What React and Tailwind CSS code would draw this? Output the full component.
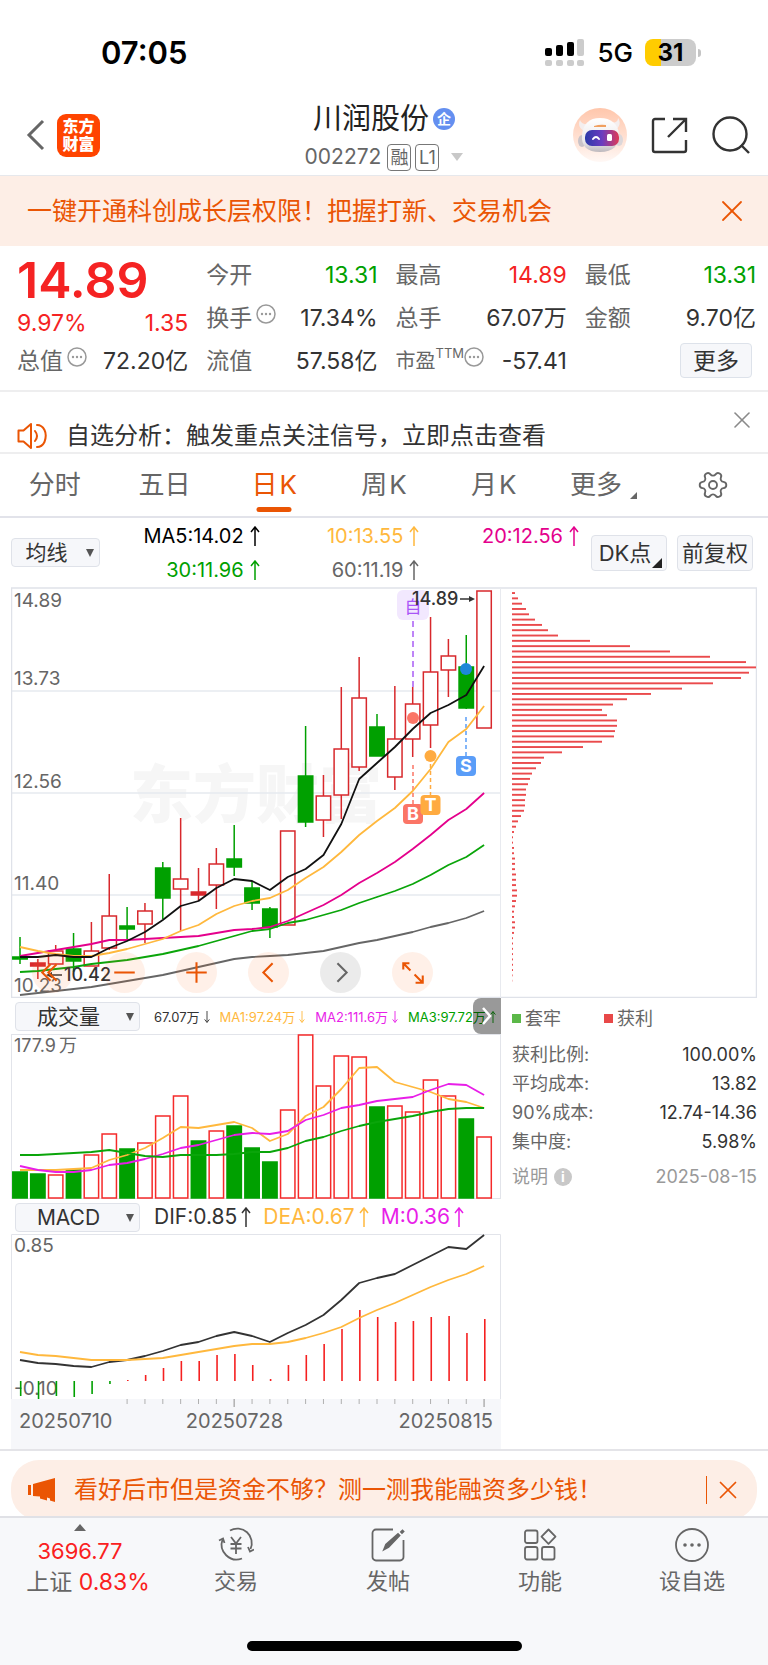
import React from 'react';
import { Settings, X } from 'lucide-react';

const RED = '#d8282c';
const GREEN = '#00a000';

const stepX = (i) => 9 + i * 17.85;
const toPoints = (values) => values.map((y, i) => `${stepX(i).toFixed(1)},${y}`).join(' ');

// kind, high, body top, body bottom, low
const candles = [
  ['g', 350, 370, 372, 377], ['s', 372, 376, 379, 392], ['r', 358, 364, 377, 377],
  ['g', 346, 362, 374, 385], ['r', 335, 364, 379, 379], ['r', 287, 329, 361, 363],
  ['g', 320, 339, 342, 352], ['r', 316, 324, 337, 356], ['g', 275, 281, 311, 332],
  ['r', 231, 292, 302, 344], ['s', 281, 305, 308, 314], ['r', 261, 277, 298, 322],
  ['g', 238, 272, 280, 289], ['g', 294, 301, 316, 323], ['g', 320, 322, 340, 351],
  ['r', 244, 244, 338, 338], ['g', 139, 189, 235, 240], ['r', 188, 209, 233, 250],
  ['r', 100, 162, 208, 232], ['r', 70, 111, 180, 184], ['g', 127, 140, 169, 169],
  ['r', 99, 152, 190, 203], ['r', 100, 117, 152, 170], ['r', 30, 85, 138, 161],
  ['r', 52, 69, 83, 110], ['g', 48, 80, 121, 122], ['r', 4, 4, 141, 141],
];

const priceLines = [
  { color: '#666666', values: [408, 406, 404, 402, 400, 397, 394, 391, 388, 384, 380, 376, 372, 370, 369, 368, 366, 364, 360, 356, 353, 349, 345, 340, 336, 331, 324] },
  { color: '#0aa50a', values: [385, 384, 382, 380, 377, 375, 373, 370, 367, 363, 359, 354, 349, 344, 342, 336, 333, 328, 323, 316, 310, 304, 297, 288, 278, 270, 258] },
  { color: '#e4008c', values: [369, 366, 363, 360, 357, 353, 353, 352, 351, 350, 349, 346, 343, 342, 340, 334, 326, 318, 308, 296, 286, 275, 262, 248, 233, 222, 206] },
  { color: '#ffb83d', values: [360, 364, 367, 369, 369, 366, 362, 357, 352, 344, 338, 327, 319, 314, 311, 303, 291, 280, 265, 248, 234, 221, 204, 182, 155, 142, 119] },
  { color: '#111111', values: [370, 370, 368, 370, 370, 361, 354, 345, 333, 319, 314, 301, 292, 294, 303, 290, 282, 268, 237, 192, 176, 160, 142, 126, 118, 108, 79] },
];

const volumes = [138, 140, 141, 136, 121, 100, 115, 109, 82, 62, 107, 97, 92, 114, 128, 76, 1, 52, 22, 23, 73, 72, 78, 46, 62, 85, 103];
const volumeDown = [0, 1, 3, 6, 10, 12, 13, 14, 20, 25];
const volumeLines = [
  { color: '#ffb83d', values: [136, 136, 136, 135, 134, 126, 121, 114, 104, 93, 94, 91, 88, 94, 107, 100, 82, 73, 55, 34, 33, 48, 53, 58, 65, 68, 74] },
  { color: '#e81ee8', values: [132, 136, 138, 138, 136, 131, 129, 125, 120, 114, 111, 106, 101, 99, 100, 97, 86, 81, 74, 71, 67, 65, 63, 56, 50, 51, 61] },
  { color: '#0aa50a', values: [121, 121, 120, 119, 118, 116, 119, 122, 123, 121, 121, 121, 120, 118, 118, 114, 107, 103, 97, 92, 88, 85, 82, 78, 75, 74, 74] },
];

const dif = [126, 129, 130, 132, 133, 128, 126, 122, 117, 111, 108, 102, 98, 102, 108, 99, 91, 81, 66, 49, 44, 40, 31, 22, 13, 15, 1];
const dea = [118, 121, 122, 124, 126, 126, 126, 125, 124, 121, 118, 115, 112, 110, 110, 108, 104, 99, 93, 84, 76, 69, 61, 53, 46, 40, 32];
const histogram = [162, 165, 162, 163, 160, 150, 146, 141, 134, 127, 127, 121, 120, 131, 145, 131, 121, 110, 95, 76, 83, 88, 87, 83, 82, 99, 85];

const chips = [
  3, 6, 10, 14, 17, 23, 30, 36, 46, 78, 118, 158, 198, 234, 244, 237, 229, 201, 170, 139, 115, 101, 90, 95, 105,
  105, 103, 102, 90, 71, 50, 32, 29, 24, 20, 18, 16, 14, 14, 13, 13, 12, 9, 6, 4, 2, 1, 1, 2, 2,
  3, 3, 3, 4, 4, 4, 5, 5, 4, 3, 2, 2, 3, 3, 2, 1, 1, 1, 1, 1, 1, 1, 0.6, 0.3,
];

export default function App() {
  return (
    <div className="w-full bg-white text-[#333] font-[Inter,'Noto_Sans_CJK_SC',sans-serif]">
      <StatusBar />
      <Header />
      <div className="h-[70px] pl-[27px] pr-[18px] flex items-center justify-between bg-[#fdeee6] text-[#ea5504]">
        <p className="text-[25px] leading-8">一键开通科创成长层权限！把握打新、交易机会</p>
        <button aria-label="关闭公告"><X size={36} strokeWidth={1.2} /></button>
      </div>
      <Quote />
      <div className="h-[62px] border-b-2 border-[#eeeeef] pl-[17px] pr-3 pb-px flex items-end">
        <SpeakerIcon />
        <p className="ml-[18px] flex-1 text-[24px] leading-[30px]">自选分析：触发重点关注信号，立即点击查看</p>
        <button aria-label="关闭提示" className="self-start mt-3.5 text-[#8a8a8a]"><X size={28} strokeWidth={1.4} /></button>
      </div>
      <PeriodTabs />
      <MaBar />
      <main className="px-[11px] flex items-start">
        <div className="flex-[490] min-w-0">
          <PriceChart />
          <VolumeBar />
          <VolumeChart />
          <MacdBar />
          <MacdChart />
          <DateAxis />
        </div>
        <div className="flex-[256] min-w-0">
          <ChipChart />
          <ChipInfo />
        </div>
      </main>
      <div className="h-[67px] border-t-2 border-[#e4e4e8] px-[11px] pt-[9px] overflow-hidden">
        <div className="h-[60px] rounded-[28px] bg-[#fdeee6] text-[#ea5504] pl-[17px] pr-3.5 flex items-center">
          <MegaphoneIcon />
          <p className="ml-[18px] flex-1 text-[24px] leading-8">看好后市但是资金不够？测一测我能融资多少钱！</p>
          <span className="w-px h-7 bg-[#ea5504] mr-1.5" />
          <button aria-label="关闭广告"><X size={30} strokeWidth={1.4} /></button>
        </div>
      </div>
      <BottomNav />
    </div>
  );
}

function StatusBar() {
  return (
    <div className="h-[95px] pl-[101px] pr-[67px] pt-2.5 flex items-center justify-between text-black">
      <span className="text-[31px] font-semibold leading-9">07:05</span>
      <div className="flex items-center">
        <svg width="40" height="28" viewBox="0 0 40 28">
          <rect x="0" y="9" width="7" height="8" rx="2" />
          <rect x="11" y="6" width="7" height="11" rx="2" />
          <rect x="22" y="3" width="7" height="14" rx="2" />
          <rect x="32" y="0" width="7" height="17" rx="2" fill="#cccccc" />
          {[0, 11, 22, 32].map((x) => (
            <rect key={x} x={x} y="21" width="7" height="6" rx="2" fill="#cccccc" />
          ))}
        </svg>
        <span className="ml-3 text-[26px] font-medium leading-7">5G</span>
        <div className="ml-3 w-[51px] h-[27px] rounded-lg overflow-hidden bg-[linear-gradient(90deg,#ffcc00_31%,#cccccc_31%)] text-center text-[24px] leading-[27px] font-bold">
          31
        </div>
        <span className="ml-0.5 w-[3px] h-2 rounded-r-full bg-[#c4c4c4]" />
      </div>
    </div>
  );
}

function Header() {
  return (
    <header className="h-[81px] border-b border-[#e6e8ec] px-[18px] grid grid-cols-[1fr_auto_1fr] items-center">
      <div className="pl-2 flex items-center gap-3">
        <button aria-label="返回">
          <svg width="19" height="32" viewBox="0 0 19 32" fill="none" stroke="#666" strokeWidth="3">
            <path d="M17 2 3 16l14 14" />
          </svg>
        </button>
        <span className="size-[43px] rounded-[9px] bg-[#ff4400] text-white text-[16px] leading-[18px] font-black flex items-center justify-center text-center">
          东方<br />财富
        </span>
      </div>
      <div className="flex flex-col items-center gap-2 pt-1">
        <h1 className="flex items-center gap-1 text-[29px] leading-8 text-[#222]">
          川润股份
          <span className="size-[22px] rounded-full bg-[#648ff0] text-white text-[14px] leading-[22px] font-bold text-center">企</span>
        </h1>
        <div className="flex items-center gap-1 text-[21px] leading-7 text-[#666]">
          <span className="mr-0.5">002272</span>
          <span className="h-[27px] w-6 rounded border border-[#777] text-[18px] leading-[25px] text-center">融</span>
          <span className="h-[27px] w-6 rounded border border-[#777] text-[18px] leading-[25px] text-center">L1</span>
          <svg width="12" height="8" viewBox="0 0 12 8" className="ml-2"><path d="M0 0h12L6 8Z" fill="#c8c8c8" /></svg>
        </div>
      </div>
      <div className="flex items-center justify-end gap-6 text-[#333]">
        <button aria-label="智能助手"><RobotIcon /></button>
        <button aria-label="分享">
          <svg width="37" height="37" viewBox="0 0 37 37" fill="none" stroke="currentColor" strokeWidth="2.4">
            <path d="M14 2H4a2 2 0 0 0-2 2v29a2 2 0 0 0 2 2h29a2 2 0 0 0 2-2V23M22 2h13v13M35 2 17 20" />
          </svg>
        </button>
        <button aria-label="搜索">
          <svg width="38" height="38" viewBox="0 0 38 38" fill="none" stroke="currentColor" strokeWidth="2.4">
            <circle cx="18" cy="18" r="16.5" />
            <path d="m29 29 8 8" />
          </svg>
        </button>
      </div>
    </header>
  );
}

function RobotIcon() {
  return (
    <svg width="54" height="54" viewBox="0 0 54 54">
      <defs>
        <linearGradient id="halo" x1="0" y1="0" x2="0" y2="1">
          <stop offset="0" stopColor="#ffc6ab" />
          <stop offset="0.6" stopColor="#ffe3d6" />
          <stop offset="1" stopColor="#fff8f5" />
        </linearGradient>
        <linearGradient id="shell" x1="0" y1="0" x2="0" y2="1">
          <stop offset="0" stopColor="#ffffff" />
          <stop offset="0.7" stopColor="#ebe8ea" />
          <stop offset="1" stopColor="#bdb8bd" />
        </linearGradient>
        <linearGradient id="visor" x1="0" y1="0" x2="1" y2="0">
          <stop offset="0" stopColor="#2b3aa8" />
          <stop offset="0.5" stopColor="#6a3cc0" />
          <stop offset="1" stopColor="#e03a55" />
        </linearGradient>
      </defs>
      <circle cx="27" cy="27" r="27" fill="url(#halo)" />
      <path d="M7 12c-2 4-1 8 4 11l5-7c-5 1-8-1-9-4ZM45 10c3 4 2 9-3 12l-5-7c5 0 8-1 8-5Z" fill="#f4eeee" />
      <ellipse cx="9" cy="33" rx="4" ry="6" fill="#c9c3c8" />
      <ellipse cx="46" cy="32" rx="4" ry="6" fill="#dcd7da" />
      <path d="M27 10c11 0 18 6 19 16 1 11-6 18-19 18S8 38 9 27c1-11 7-17 18-17Z" fill="url(#shell)" />
      <path d="M21 18q6-2 12-1v2H21Z" fill="#f0a060" />
      <rect x="12" y="22" width="34" height="16" rx="7" fill="url(#visor)" />
      <path d="M20 31q3-4 6 0" fill="none" stroke="#fff" strokeWidth="2" strokeLinecap="round" />
      <rect x="34" y="26" width="5" height="7" rx="1.500" fill="#fff" />
    </svg>
  );
}

function SpeakerIcon() {
  return (
    <svg width="31" height="28" viewBox="0 0 31 28" fill="none" stroke="#ea5504" strokeWidth="2" strokeLinejoin="round" strokeLinecap="round" className="shrink-0 mb-px">
      <path d="M1.500 8.500h5L14 2v24l-7.500-6.500h-5Z" />
      <path d="M18 9q4 5 0 10M20 3q5 0 7.500 5t0 12Q25 25 20 25" />
    </svg>
  );
}

function MegaphoneIcon() {
  return (
    <svg width="28" height="26" viewBox="0 0 28 26" fill="currentColor" className="shrink-0">
      <path d="M0 8h3v10H0ZM5 7 27 1v24l-5-1.500v-2l-3-1v3l-7-2v-2L5 19Z" />
    </svg>
  );
}

function Dots() {
  return (
    <svg width="20" height="20" viewBox="0 0 20 20" className="mb-2 shrink-0" fill="#999">
      <circle cx="10" cy="10" r="9" fill="none" stroke="#999" strokeWidth="1.500" />
      <circle cx="6" cy="10" r="1.200" /><circle cx="10" cy="10" r="1.200" /><circle cx="14" cy="10" r="1.200" />
    </svg>
  );
}

function Stat({ label, value, dots, color = 'text-[#333]' }) {
  return (
    <div className="h-[43px] flex items-center justify-between text-[23px] leading-8 whitespace-nowrap">
      <span className="flex items-center gap-1 text-[#666]">{label}{dots && <Dots />}</span>
      <span className={color}>{value}</span>
    </div>
  );
}

function Quote() {
  return (
    <section className="pl-[17px] pr-3 pt-[7px] pb-2 border-b-2 border-[#eeeeef] grid grid-cols-4 gap-x-[18px]">
      <div>
        <div className="h-[54px] flex items-center text-[50px] leading-[54px] font-semibold text-[#f52323]">14.89</div>
        <div className="h-8 flex items-center justify-between text-[23px] leading-8 text-[#f52323]">
          <span>9.97%</span>
          <span>1.35</span>
        </div>
        <Stat label="总值" dots value="72.20亿" />
      </div>
      <div>
        <Stat label="今开" value="13.31" color="text-[#00a000]" />
        <Stat label="换手" dots value="17.34%" />
        <Stat label="流值" value="57.58亿" />
      </div>
      <div>
        <Stat label="最高" value="14.89" color="text-[#f52323]" />
        <Stat label="总手" value="67.07万" />
        <div className="h-[43px] flex items-center justify-between text-[23px] leading-8">
          <span className="flex items-center text-[#666] text-[20px]">
            市盈<span className="mb-4 text-[13px] leading-4">TTM</span><Dots />
          </span>
          <span>-57.41</span>
        </div>
      </div>
      <div>
        <Stat label="最低" value="13.31" color="text-[#00a000]" />
        <Stat label="金额" value="9.70亿" />
        <div className="h-[43px] flex items-center justify-end pr-1">
          <button className="w-[72px] h-[35px] rounded border border-[#dde2ea] bg-[#f6f7fa] text-[23px] leading-8">更多</button>
        </div>
      </div>
    </section>
  );
}

function PeriodTabs() {
  const tabs = ['分时', '五日', '日K', '周K', '月K'];
  return (
    <nav className="h-[64px] border-b-2 border-[#e2e3ea] flex text-[26px] leading-8 text-[#666]">
      {tabs.map((tab) => (
        <button key={tab} className={`flex-1 relative ${tab === '日K' ? 'text-[#ea5504]' : ''}`}>
          {tab.replace('K', ' K').split(' ').map((part) => (
            <span key={part} className="mx-px">{part}</span>
          ))}
          {tab === '日K' && <span className="absolute bottom-1 left-1/2 -translate-x-1/2 w-[35px] h-[5px] rounded-sm bg-[#ea5504]" />}
        </button>
      ))}
      <button className="flex-1 flex items-center justify-center gap-2">
        更多
        <svg width="7" height="7" viewBox="0 0 7 7" className="mt-5"><path d="M7 0v7H0Z" fill="#666" /></svg>
      </button>
      <button aria-label="设置" className="flex-1 flex items-center justify-center">
        <Settings size={32} strokeWidth={1.4} className="rotate-90" />
      </button>
    </nav>
  );
}

function Arrow({ down, small }) {
  return (
    <svg viewBox="0 0 10 20" fill="none" stroke="currentColor" strokeWidth="1.500"
      className={`inline-block shrink-0 ${small ? 'w-[6px] h-3' : 'w-[10px] h-5'} ${down ? 'rotate-180' : ''}`}
    >
      <path d="M5 20V1M1 6l4-5 4 5" />
    </svg>
  );
}

function Picker({ label, options, className }) {
  return (
    <span className={`relative shrink-0 ${className}`}>
      <select aria-label={label} className="w-full h-[29px] appearance-none rounded border border-[#dfe2e9] bg-[#f6f7fa] pl-3 pr-[30px] text-[21px] leading-[27px] text-center text-[#333]">
        {options.map((o) => <option key={o}>{o}</option>)}
      </select>
      <svg width="8" height="8" viewBox="0 0 8 8" className="absolute right-[6px] top-[11px] pointer-events-none"><path d="M0 0h8L4 8Z" fill="#555" /></svg>
    </span>
  );
}

function MaBar() {
  const items = [
    ['MA5:14.02', 'text-black'], ['10:13.55', 'text-[#ffb83d]'], ['20:12.56', 'text-[#e4008c]'],
    ['30:11.96', 'text-[#00a000]'], ['60:11.19', 'text-[#666]'],
  ];
  return (
    <div className="h-[69px] pl-[11px] pr-[15px] flex items-center">
      <Picker label="主图指标" options={['均线', 'BOLL']} className="w-[89px]" />
      <div className="flex-1 grid grid-cols-3 text-[20px] leading-[34px]">
        {items.map(([text, color]) => (
          <span key={text} className={`flex items-center justify-end gap-1.5 ${color}`}>{text}<Arrow /></span>
        ))}
      </div>
      <button className="relative ml-3 w-[76px] h-9 rounded border border-[#dfe2e9] bg-[#f6f7fa] text-[22px] leading-8 pr-2">
        DK点
        <svg width="10" height="10" viewBox="0 0 10 10" className="absolute right-1 bottom-0.5"><path d="M10 0v10H0Z" fill="#222" /></svg>
      </button>
      <button className="ml-2.5 w-[76px] h-9 rounded border border-[#dfe2e9] bg-[#f6f7fa] text-[22px] leading-8">前复权</button>
    </div>
  );
}

function Line({ values, color }) {
  return <polyline points={toPoints(values)} fill="none" stroke={color} strokeWidth="1.800" strokeLinejoin="round" />;
}

function Marker({ x, y, color, letter, from }) {
  return (
    <g>
      <path d={`M${x} ${from}V${y}`} stroke={color} strokeWidth="1.500" strokeDasharray="4 3" />
      <rect x={x - 10} y={y} width="20" height="20" rx="4" fill={color} />
      <text x={x} y={y + 16} textAnchor="middle" fontSize="18" fontWeight="700" fill="#fff">{letter}</text>
    </g>
  );
}

function PriceChart() {
  const labels = [['14.89', 20], ['13.73', 98], ['12.56', 201], ['11.40', 303], ['10.23', 405]];
  return (
    <div className="relative">
      <svg viewBox="0 0 490 411" className="block w-full h-auto">
        <text x="119" y="230" fontSize="63" fontWeight="900" fill="#f6f6f6">东方财富</text>
        <path d="M0 104H490M0 206H490M0 308H490" stroke="#e6eaf0" strokeWidth="1.500" />
        <path d="M.5 411V1H490M.5 410.500H490" fill="none" stroke="#dfe2e9" strokeWidth="1.500" />
        <path d="M489.500 1V411" stroke="#e8eaef" />
        {candles.map(([kind, high, top, bottom, low], i) => {
          const x = stepX(i);
          const color = kind === 'g' ? GREEN : RED;
          return (
            <g key={i} stroke={color} strokeWidth="1.500">
              <path d={`M${x} ${high}V${top}M${x} ${bottom}V${low}`} />
              <rect x={x - 7.2} y={top} width="14.400" height={bottom - top} fill={kind === 'r' ? '#fff' : color} />
            </g>
          );
        })}
        <rect x="386" y="3" width="32" height="30" rx="6" fill="#f2e8fe" />
        <text x="402" y="26" textAnchor="middle" fontSize="17" fill="#a855f7">自</text>
        <path d="M402 34V101" stroke="#a95cf5" strokeWidth="1.500" strokeDasharray="6 4" />
        <circle cx="402" cy="131" r="6" fill="#fb7566" />
        <circle cx="419.500" cy="169" r="6" fill="#ffab40" />
        <circle cx="455" cy="82" r="6" fill="#1e88d8" />
        <Marker x={402} y={217} from={178} color="#fb7566" letter="B" />
        <Marker x={419.5} y={208} from={170} color="#ffab40" letter="T" />
        <Marker x={455} y={169} from={130} color="#5a9df8" letter="S" />
        {priceLines.map((line) => <Line key={line.color} {...line} />)}
        {labels.map(([text, y]) => <text key={text} x="3" y={y} fontSize="19" fill="#666">{text}</text>)}
        <g fill="#333" fontSize="18" fontWeight="500">
          <text x="401" y="18">14.89</text>
          <text x="53" y="394">10.42</text>
        </g>
        <path d="M449 12h13M37 388h14" stroke="#333" strokeWidth="1.500" />
        <path d="m464 12-6-3v6ZM35 388l6-3v6Z" fill="#333" />
      </svg>
      <div className="absolute bottom-[5px] left-[21px] flex gap-[31px] text-[#ea5504]">
        <RoundButton label="最早" path="m18 12-8 8 8 8M24 12l-8 8 8 8" />
        <RoundButton label="缩小" path="M10 20h20" />
        <RoundButton label="放大" path="M10 20h20M20 10v20" />
        <RoundButton label="向前" path="m24 11-9 9 9 9" />
        <RoundButton label="向后" path="m17 11 9 9-9 9" grey />
        <RoundButton label="全屏" path="M11 17v-6h6M11 11l7 7M30 23v7h-7M30 30l-8-8" />
      </div>
    </div>
  );
}

function RoundButton({ label, path, grey }) {
  return (
    <button aria-label={label} className={`size-[41px] rounded-full ${grey ? 'bg-black/8 text-[#666]' : 'bg-[#ff6a1a]/10'}`}>
      <svg viewBox="0 0 40 40" fill="none" stroke="currentColor" strokeWidth="2"><path d={path} /></svg>
    </button>
  );
}

function VolumeBar() {
  return (
    <div className="relative h-9 pl-1 pt-px flex items-center gap-3.5 text-[13px] leading-5 whitespace-nowrap">
      <Picker label="副图指标一" options={['成交量', '成交额']} className="w-[125px]" />
      <div className="flex items-center gap-2.5 min-w-0">
        <span className="flex items-center gap-1">67.07万<Arrow down small /></span>
        <span className="flex items-center gap-1 text-[#ffb83d]">MA1:97.24万<Arrow down small /></span>
        <span className="flex items-center gap-1 text-[#e81ee8]">MA2:111.6万<Arrow down small /></span>
        <span className="flex items-center gap-1 text-[#00a000]">MA3:97.72万<Arrow small /></span>
      </div>
      <button aria-label="收起筹码" className="absolute right-0 top-0 w-7 h-9 rounded-l-lg bg-black/40 flex items-center justify-center">
        <svg width="10" height="18" viewBox="0 0 10 18" fill="none" stroke="#fff" strokeWidth="2.500"><path d="m1 1 7 8-7 8" /></svg>
      </button>
    </div>
  );
}

function VolumeChart() {
  return (
    <svg viewBox="0 0 490 165" className="block w-full h-auto">
      <rect x=".5" y=".5" width="489" height="164" fill="none" stroke="#e2e4ea" />
      {volumes.map((top, i) => {
        const down = volumeDown.includes(i);
        return (
          <rect key={i} x={stepX(i) - 7.2} y={top} width="14.400" height={164 - top}
            fill={down ? GREEN : '#fff'} stroke={down ? GREEN : '#f52a2a'} strokeWidth="1.500" />
        );
      })}
      {volumeLines.map((line) => <Line key={line.color} {...line} />)}
      <text x="3" y="18" fontSize="18" fill="#666">177.9<tspan dx="3">万</tspan></text>
    </svg>
  );
}

function MacdBar() {
  return (
    <div className="h-[35px] pl-1 pt-px flex items-center gap-3.5 text-[21px] leading-7 whitespace-nowrap">
      <Picker label="副图指标二" options={['MACD', 'KDJ']} className="w-[125px]" />
      <div className="flex items-center gap-3">
        <span className="flex items-center gap-1">DIF:0.85<Arrow /></span>
        <span className="flex items-center gap-1 text-[#ffb83d]">DEA:0.67<Arrow /></span>
        <span className="flex items-center gap-1 text-[#e81ee8]">M:0.36<Arrow /></span>
      </div>
    </div>
  );
}

function MacdChart() {
  return (
    <svg viewBox="0 0 490 165" className="block w-full h-auto">
      <path d="M.5 165V.5H489.500V165" fill="none" stroke="#e2e4ea" />
      <text x="3" y="18" fontSize="19" fill="#666">0.85</text>
      <text x="3" y="161" fontSize="19" fill="#666">-0.10</text>
      {histogram.map((y, i) => (
        <path key={i} d={`M${stepX(i) + 0.7} 147V${y}`} stroke={y > 147 ? GREEN : '#f52020'} strokeWidth="1.600" />
      ))}
      <Line values={dif} color="#333333" />
      <Line values={dea} color="#ffb83d" />
    </svg>
  );
}

function DateAxis() {
  return (
    <div className="h-[50px] bg-[#f6f7fa]">
      <svg viewBox="0 0 490 9" className="block w-full h-auto">
        {histogram.map((_, i) => i > 5 && (
          <path key={i} d={`M${stepX(i)} 0V${i === 12 || i === 26 ? 8 : 5}`} stroke="#b0b0b0" strokeWidth={i === 12 || i === 26 ? 1.5 : 1} />
        ))}
      </svg>
      <div className="pl-2 pr-2 flex justify-between text-[20px] leading-[26px] text-[#666]">
        <span>20250710</span>
        <span className="pr-[42px]">20250728</span>
        <span>20250815</span>
      </div>
    </div>
  );
}

function ChipChart() {
  return (
    <svg viewBox="0 0 256 411" className="block w-full h-auto">
      <path d="M0 1H255.500V410.500H0" fill="none" stroke="#dfe2e9" strokeWidth="1.500" />
      {chips.map((length, i) => (
        <rect key={i} x="11" y={5.1 + i * 5.31} width={length} height="1.900" fill="#ea4a4c" />
      ))}
    </svg>
  );
}

function ChipInfo() {
  const rows = [['获利比例:', '100.00%'], ['平均成本:', '13.82'], ['90%成本:', '12.74-14.36'], ['集中度:', '5.98%']];
  return (
    <section className="pl-[11px] text-[18px] leading-[29px] text-[#666]">
      <div className="h-10 mb-0.5 flex items-center gap-[43px]">
        <span className="flex items-center gap-1"><i className="size-[9px] bg-[#5bb848]" />套牢</span>
        <span className="flex items-center gap-1"><i className="size-[9px] bg-[#e84848]" />获利</span>
      </div>
      {rows.map(([label, value]) => (
        <div key={label} className="flex justify-between">
          <span>{label}</span>
          <span className="text-[#333]">{value}</span>
        </div>
      ))}
      <div className="mt-1.5 flex justify-between text-[#999]">
        <span className="flex items-center gap-1.5">
          说明
          <span className="size-[18px] rounded-full bg-[#c8c8c8] text-white text-[14px] leading-[18px] font-bold text-center">i</span>
        </span>
        <span>2025-08-15</span>
      </div>
    </section>
  );
}

function BottomNav() {
  return (
    <footer className="h-[149px] border-t-2 border-[#e0e1e6] bg-[#f7f8fa] flex flex-col justify-between">
      <nav className="flex text-[#666] text-[22px] leading-[31px]">
        <a href="#index" className="w-40 pt-1.5 flex flex-col items-center">
          <svg width="12" height="7" viewBox="0 0 12 7"><path d="M6 0l6 7H0Z" fill="#666" /></svg>
          <span className="mt-[5px] text-[#fa2020]">3696.77</span>
          <span className="pl-4 text-[23px] whitespace-nowrap">上证 <span className="text-[#fa2020]">0.83%</span></span>
        </a>
        <NavItem label="交易">
          <path d="M12 3.500A14.500 14.500 0 0 1 32.500 22M24 31.500A15 15 0 0 1 4.500 12.500" />
          <path d="M1 13.500 5 11.500l1.500 4.500M36 22.500l-4 2L30 20" />
          <path d="m13 10 5 6.500 5-6.500M18 16.500V27M12.500 17h11M12.500 21.500h11" />
        </NavItem>
        <NavItem label="发帖">
          <path d="M23 2.500H6A3.500 3.500 0 0 0 2.500 6v24A3.500 3.500 0 0 0 6 33.500h24a3.500 3.500 0 0 0 3.500-3.500V13" />
          <path d="m14 22.500 2-5L28 7l1.500 1.500L18.500 20ZM31 5l1.500-1.500 1 1L32 6Z" fill="currentColor" />
        </NavItem>
        <NavItem label="功能">
          <rect x="3" y="3.500" width="12.500" height="12.500" rx="2" />
          <rect x="3" y="20" width="12.500" height="12.500" rx="2" />
          <rect x="20" y="20" width="12.500" height="12.500" rx="2" />
          <path d="m26.500 2.500 7 7.200-7 7.200-7-7.200Z" strokeLinejoin="round" />
        </NavItem>
        <NavItem label="设自选">
          <circle cx="18" cy="18" r="16" />
          <g fill="currentColor" stroke="none"><circle cx="11" cy="18" r="1.800" /><circle cx="18" cy="18" r="1.800" /><circle cx="25" cy="18" r="1.800" /></g>
        </NavItem>
      </nav>
      <span className="self-center mb-3.5 w-[275px] h-2.5 rounded-full bg-black" />
    </footer>
  );
}

function NavItem({ label, children }) {
  return (
    <button className="flex-1 pt-[9px] flex flex-col items-center gap-[3px]">
      <svg width="36" height="36" viewBox="0 0 36 36" fill="none" stroke="currentColor" strokeWidth="1.800">{children}</svg>
      {label}
    </button>
  );
}
